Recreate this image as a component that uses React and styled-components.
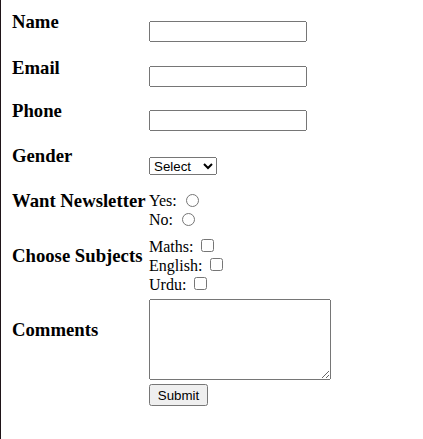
import React from "react";
import styled, { createGlobalStyle } from "styled-components";

const Global = createGlobalStyle`
  html, body { margin: 0; padding: 0; background: #ffffff; }
  body { font-family: "Liberation Serif", "Times New Roman", serif; font-size: 16px; color: #000; }
`;

const Page = styled.form`
  box-sizing: border-box;
  min-height: 100vh;
  border-left: 1px solid #1f1418;
  padding: 10px 0 0 11px;
  display: flex;
  flex-direction: column;
`;

const Row = styled.div`
  display: grid;
  grid-template-columns: 137px auto;
  align-items: start;
  height: ${(p) => (p.$h ? `${p.$h}px` : "auto")};
`;

const Label = styled.div`
  font-size: 18.72px;
  font-weight: bold;
  line-height: 22px;
  white-space: nowrap;
  margin-top: ${(p) => p.$top || 0}px;
`;

const Field = styled.div`
  display: flex;
  flex-direction: column;
  align-items: flex-start;
  margin-top: ${(p) => p.$top || 0}px;
`;

const Line = styled.div`
  line-height: ${(p) => p.$lh || 18.5}px;
  height: ${(p) => p.$lh || 18.5}px;
  white-space: nowrap;
`;

const TextInput = styled.input`
  box-sizing: border-box;
  width: 158px;
  height: 21px;
  margin: 0;
  font: 13.33px "Liberation Sans", Arial, sans-serif;
`;

const Select = styled.select`
  box-sizing: border-box;
  width: 68px;
  height: 18px;
  margin: 0;
  font: 13.33px "Liberation Sans", Arial, sans-serif;
`;

const TextArea = styled.textarea`
  box-sizing: border-box;
  width: 182px;
  height: 81px;
  margin: 0;
  font: 13.33px "Liberation Mono", monospace;
`;

const Submit = styled.button`
  box-sizing: border-box;
  width: 59px;
  height: 22px;
  margin: 4px 0 0 0;
  padding: 1px 6px;
  font: 13.33px "Liberation Sans", Arial, sans-serif;
`;

const Radio = styled.input.attrs({ type: "radio" })`
  width: 13px;
  height: 13px;
  margin: 0 3px 0 5px;
  vertical-align: -1px;
`;

const Check = styled.input.attrs({ type: "checkbox" })`
  width: 13px;
  height: 13px;
  margin: 0 3px 0 4px;
  vertical-align: 0;
`;

export default function App() {
  return (
    <>
      <Global />
      <Page onSubmit={(e) => e.preventDefault()}>
        <Row $h={45}>
          <Label $top={1}>Name</Label>
          <Field $top={11}>
            <TextInput type="text" />
          </Field>
        </Row>
        <Row $h={44}>
          <Label $top={2}>Email</Label>
          <Field $top={11}>
            <TextInput type="text" />
          </Field>
        </Row>
        <Row $h={45}>
          <Label $top={1}>Phone</Label>
          <Field $top={11}>
            <TextInput type="text" />
          </Field>
        </Row>
        <Row $h={45}>
          <Label $top={1}>Gender</Label>
          <Field $top={13}>
            <Select defaultValue="">
              <option value="">Select</option>
              <option value="m">Male</option>
              <option value="f">Female</option>
            </Select>
          </Field>
        </Row>
        <Row $h={47}>
          <Label $top={1}>Want Newsletter</Label>
          <Field $top={3}>
            <Line>
              Yes: <Radio name="nl" />
            </Line>
            <Line>
              No: <Radio name="nl" />
            </Line>
          </Field>
        </Row>
        <Row $h={62}>
          <Label $top={9}>Choose Subjects</Label>
          <Field $top={1}>
            <Line $lh={19}>
              Maths: <Check />
            </Line>
            <Line $lh={19}>
              English: <Check />
            </Line>
            <Line $lh={19}>
              Urdu: <Check />
            </Line>
          </Field>
        </Row>
        <Row>
          <Label $top={21}>Comments</Label>
          <Field $top={1}>
            <TextArea />
            <Submit type="submit">Submit</Submit>
          </Field>
        </Row>
      </Page>
    </>
  );
}
